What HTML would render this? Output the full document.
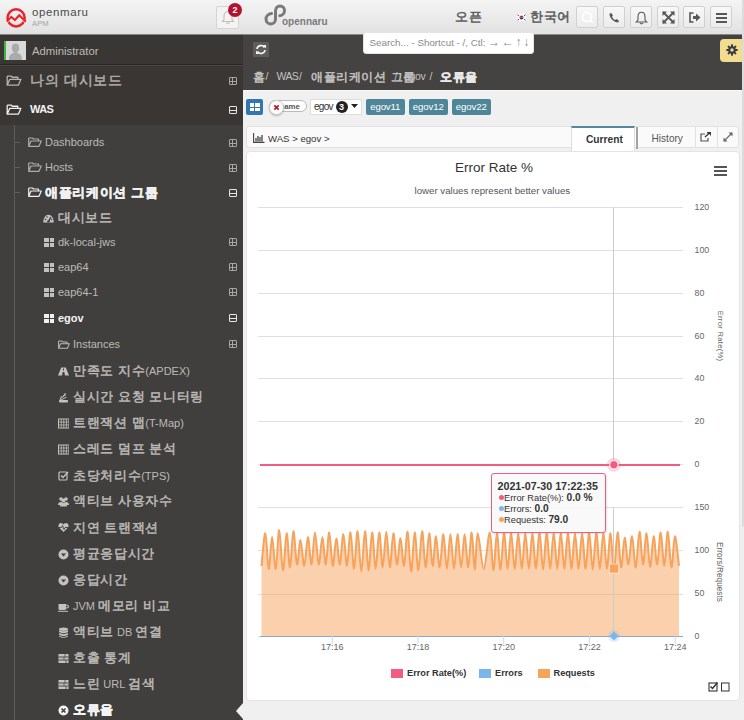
<!DOCTYPE html>
<html><head><meta charset="utf-8">
<style>
*{box-sizing:border-box;margin:0;padding:0}
html,body{width:744px;height:720px;overflow:hidden;font-family:"Liberation Sans",sans-serif;background:#f0f0f0}
.a{position:absolute}
.t{position:absolute;white-space:nowrap;line-height:1}
.k{letter-spacing:0.05em;font-size:1.15em;-webkit-text-stroke:0.5px currentColor}
#hdr{left:0;top:0;width:744px;height:34px;background:linear-gradient(#f4f4f4,#e2e2e2)}
#side{left:0;top:34px;width:243px;height:686px;background:#3f3c3a}
.btn{position:absolute;top:6px;width:22px;height:22px;border:1px solid #d0d0d0;border-radius:2px;background:linear-gradient(#f8f8f8,#ececec)}
.si{color:#bdbab7;font-size:11px}
.pm{position:absolute;left:228.5px;width:8px;height:8px;border:1px solid #a8a6a4;border-radius:1px;margin-top:1px}
.pm:before{content:"";position:absolute;left:0;top:2.5px;width:6px;height:1px;background:#a8a6a4}
.pm.p:after{content:"";position:absolute;left:2.5px;top:0;width:1px;height:6px;background:#a8a6a4}
.pm.w{border-color:#e6e6e6}.pm.w:before{background:#e6e6e6}
.ylab{font-size:9px;color:#666}
.grid{position:absolute;height:1px;background:#e6e6e6}
</style></head>
<body>
<div id="hdr" class="a">
 <svg class="a" style="left:5px;top:7px" width="24" height="22" viewBox="0 0 24 22">
  <circle cx="11.1" cy="10.9" r="8.6" fill="none" stroke="#e8232c" stroke-width="2.5"/>
  <path d="M2.2 15.6 L6.3 10.9 L9.9 14 L14.2 9.3 L20.5 15.8" fill="none" stroke="#f0f0f0" stroke-width="1.2"/>
  <path d="M1.9 14.6 L6.3 9.9 L9.9 13 L14.2 8.3 L20.8 14.8" fill="none" stroke="#e8232c" stroke-width="2"/>
 </svg>
 <div class="t" style="left:32px;top:6.5px;font-size:11.5px;color:#4a4a4a;letter-spacing:0.6px">openmaru</div>
 <div class="t" style="left:32px;top:19.5px;font-size:7.7px;color:#a5a5a5">APM</div>
 <div class="a" style="left:216px;top:6px;width:23px;height:22.5px;border:1px solid #d4d4d4;background:#f3f3f3;border-radius:2px">
  <svg class="a" style="left:4px;top:3px" width="14" height="15" viewBox="0 0 14 15"><path d="M7 1.5 C4 1.5 3 4 3 6.5 L3 9.5 L1.5 11.5 L12.5 11.5 L11 9.5 L11 6.5 C11 4 10 1.5 7 1.5 Z M5.5 12.5 Q7 14.5 8.5 12.5" fill="none" stroke="#c9bcb4" stroke-width="1.1"/></svg>
 </div>
 <div class="a" style="left:228px;top:3px;width:14px;height:14px;border-radius:7px;background:#b3122e"></div>
 <div class="t" style="left:228px;top:5.5px;width:14px;text-align:center;font-size:9px;font-weight:bold;color:#fff">2</div>
 <svg class="a" style="left:264px;top:4px" width="24" height="24" viewBox="0 0 24 24"><path d="M7.5 9.5 C4 10 2 12.5 2 15 C2 18 4.5 20 7 20 C10 20 11.5 17.5 11.5 15 L11.5 7 C11.5 4 13.5 2 16 2 C18.5 2 20.5 4 20.5 6.5 C20.5 9 18.5 11.5 15.7 11.7" fill="none" stroke="#7a7a7a" stroke-width="3" stroke-linecap="round"/></svg>
 <div class="t" style="left:282px;top:16.5px;font-size:10px;color:#7a7a7a;font-weight:bold">opennaru</div>
 <div class="t" style="left:455px;top:11px;font-size:11px;color:#585858"><span class="k">오픈</span></div>
 <svg class="a" style="left:517px;top:14px" width="9" height="7" viewBox="0 0 9 7"><rect width="9" height="7" fill="#fff"/><path d="M2.5 3.5 A2 2 0 0 1 6.5 3.5 Z" fill="#d22"/><path d="M2.5 3.5 A2 2 0 0 0 6.5 3.5 Z" fill="#1a3e9a"/><path d="M0.5 0.8 L2 2 M7 2 L8.5 0.8 M0.5 6.2 L2 5 M7 5 L8.5 6.2" stroke="#333" stroke-width="0.9"/></svg>
 <div class="t" style="left:530px;top:11px;font-size:11px;color:#585858"><span class="k">한국어</span></div>
 <svg class="a" style="left:562px;top:15px" width="6" height="5" viewBox="0 0 6 5"><path d="M0.5 1 L3 3.5 L5.5 1" fill="none" stroke="#555" stroke-width="1"/></svg>
 <div class="btn" style="left:576px"><svg class="a" style="left:4px;top:4px" width="13" height="13" viewBox="0 0 13 13"><circle cx="6" cy="6" r="4.6" fill="none" stroke="#fff" stroke-width="1.6"/><path d="M9.2 9.2 L12 12" stroke="#fff" stroke-width="1.6"/></svg></div>
 <div class="btn" style="left:603px"><svg class="a" style="left:5px;top:5px" width="11" height="11" viewBox="0 0 11 11"><path d="M2 0.8 L4 3.5 L3 4.8 C3.8 6.5 4.6 7.3 6.2 8 L7.5 7 L10.2 9 L9 10.5 C5 10.5 0.5 6 0.5 2 Z" fill="#585858"/></svg></div>
 <div class="btn" style="left:630px"><svg class="a" style="left:4px;top:4px" width="13" height="14" viewBox="0 0 13 14"><path d="M6.5 1.2 C3.8 1.2 3 3.5 3 6 L3 9 L1.2 11 L11.8 11 L10 9 L10 6 C10 3.5 9.2 1.2 6.5 1.2 Z M5 12 Q6.5 13.8 8 12" fill="none" stroke="#585858" stroke-width="1.1"/></svg></div>
 <div class="btn" style="left:657px"><svg class="a" style="left:4px;top:4px" width="13" height="13" viewBox="0 0 13 13"><path d="M1 1 L12 12 M12 1 L1 12" stroke="#585858" stroke-width="1.8"/><path d="M0.5 0.5 L5 0.5 L0.5 5 Z M12.5 0.5 L8 0.5 L12.5 5 Z M0.5 12.5 L5 12.5 L0.5 8 Z M12.5 12.5 L8 12.5 L12.5 8 Z" fill="#585858"/></svg></div>
 <div class="btn" style="left:683px"><svg class="a" style="left:5px;top:5px" width="12" height="11" viewBox="0 0 12 11"><path d="M4.5 1 L1 1 L1 10 L4.5 10" fill="none" stroke="#585858" stroke-width="1.6"/><path d="M4 4 L7 4 L7 1.5 L11.5 5.5 L7 9.5 L7 7 L4 7 Z" fill="#585858"/></svg></div>
 <div class="btn" style="left:710px"><div class="a" style="left:5px;top:6px;width:11px;height:2px;background:#585858;box-shadow:0 4px 0 #585858,0 8px 0 #585858"></div></div>
</div>
<div id="side" class="a">
 <div class="a" style="left:0;top:0;width:243px;height:91px;background:#3a3633"></div>
 <div class="a" style="left:0;top:30px;width:243px;height:1px;background:#2a2725"></div>
 <div class="a" style="left:0;top:31px;width:243px;height:1px;background:#4a4644"></div>
 <div class="a" style="left:4px;top:7px;width:22px;height:19px;background:#d9d9d9;border-left:2.5px solid #3fb63f">
  <svg class="a" style="left:0;top:0" width="19" height="19" viewBox="0 0 19 19"><path d="M9.5 2.5 C7 2.5 5.8 4.5 5.8 7 C5.8 9 6.8 10.5 7.8 11.2 L7.8 12 C4.5 12.8 3 14.5 3 19 L16 19 C16 14.5 14.5 12.8 11.2 12 L11.2 11.2 C12.2 10.5 13.2 9 13.2 7 C13.2 4.5 12 2.5 9.5 2.5 Z" fill="#ababab"/></svg>
 </div>
 <div class="t" style="left:32px;top:11.8px;font-size:11.3px;color:#bdbab7">Administrator</div>
</div>
<div class="a" style="left:0;top:125px;width:243px;height:595px;background:#403f3d"></div>
<!-- folder icons -->
<svg width="0" height="0" style="position:absolute"><defs>
 <g id="fold"><path d="M0.7 2 L0.7 10.3 L11 10.3 L13.3 5 L3 5 L0.7 10.3 M0.7 2 L4.5 2 L5.5 3 L10.5 3 L10.5 5" fill="none" stroke="currentColor" stroke-width="1.2" stroke-linejoin="round"/></g>
</defs></svg>
<svg class="a" style="left:6px;top:74px;color:#b6b3b0" width="16" height="13" viewBox="0 0 14 12"><use href="#fold"/></svg>
<div class="t si" style="left:30px;top:74px;font-size:12px;color:#aeaba8"><span class="k">나의 대시보드</span></div>
<div class="pm p" style="top:76px"></div>
<svg class="a" style="left:6px;top:103px;color:#f0f0f0" width="16" height="13" viewBox="0 0 14 12"><use href="#fold"/></svg>
<div class="t" style="left:30px;top:104px;font-size:11px;color:#f2f2f2;font-weight:bold;letter-spacing:-0.6px">WAS</div>
<div class="pm w" style="top:105px"></div>
<!-- tree line -->
<div class="a" style="left:14px;top:125px;width:1px;height:595px;background:#5e5b59"></div>
<div class="a" style="left:14px;top:142px;width:6px;height:1px;background:#5e5b59"></div>
<div class="a" style="left:14px;top:167px;width:6px;height:1px;background:#5e5b59"></div>
<div class="a" style="left:14px;top:192px;width:6px;height:1px;background:#5e5b59"></div>
<svg class="a" style="left:28px;top:136px;color:#aeaba8" width="14" height="12" viewBox="0 0 14 12"><use href="#fold"/></svg>
<div class="t si" style="left:45px;top:137px">Dashboards</div>
<div class="pm p" style="top:138px"></div>
<svg class="a" style="left:28px;top:161px;color:#aeaba8" width="14" height="12" viewBox="0 0 14 12"><use href="#fold"/></svg>
<div class="t si" style="left:45px;top:162px">Hosts</div>
<div class="pm p" style="top:163px"></div>
<svg class="a" style="left:28px;top:186px;color:#f0f0f0" width="14" height="12" viewBox="0 0 14 12"><use href="#fold"/></svg>
<div class="t si" style="left:45px;top:187px;color:#f0f0f0;font-weight:bold"><span class="k">애플리케이션 그룹</span></div>
<div class="pm w" style="top:188px"></div>
<!-- level 3 -->
<svg class="a" style="left:43px;top:213.5px" width="11" height="9" viewBox="0 0 11 9"><path d="M0.3 8.5 C0.3 4 2.6 0.8 5.5 0.8 C8.4 0.8 10.7 4 10.7 8.5 Z" fill="#c4c1be"/><path d="M5.5 7.5 L7.8 3" stroke="#403f3d" stroke-width="1.3"/><circle cx="2.5" cy="5.5" r="0.8" fill="#403f3d"/><circle cx="8.5" cy="5.5" r="0.8" fill="#403f3d"/><circle cx="4" cy="3" r="0.8" fill="#403f3d"/><circle cx="5.5" cy="7.3" r="1.2" fill="#403f3d"/></svg>
<div class="t si" style="left:58px;top:212px"><span class="k">대시보드</span></div>
<div class="a" style="left:43.5px;top:237.5px;width:10.5px;height:9px;background:#c4c1be"><div class="a" style="left:0;top:4px;width:10.5px;height:1px;background:#403f3d"></div><div class="a" style="left:5px;top:0;width:1px;height:9px;background:#403f3d"></div></div>
<div class="t si" style="left:58px;top:237px">dk-local-jws</div>
<div class="pm p" style="top:237px"></div>
<div class="a" style="left:43.5px;top:262.5px;width:10.5px;height:9px;background:#c4c1be"><div class="a" style="left:0;top:4px;width:10.5px;height:1px;background:#403f3d"></div><div class="a" style="left:5px;top:0;width:1px;height:9px;background:#403f3d"></div></div>
<div class="t si" style="left:58px;top:262px">eap64</div>
<div class="pm p" style="top:262px"></div>
<div class="a" style="left:43.5px;top:287.5px;width:10.5px;height:9px;background:#c4c1be"><div class="a" style="left:0;top:4px;width:10.5px;height:1px;background:#403f3d"></div><div class="a" style="left:5px;top:0;width:1px;height:9px;background:#403f3d"></div></div>
<div class="t si" style="left:58px;top:287px">eap64-1</div>
<div class="pm p" style="top:287px"></div>
<div class="a" style="left:43.5px;top:313.5px;width:10.5px;height:9px;background:#f0f0f0"><div class="a" style="left:0;top:4px;width:10.5px;height:1px;background:#403f3d"></div><div class="a" style="left:5px;top:0;width:1px;height:9px;background:#403f3d"></div></div>
<div class="t si" style="left:58px;top:313px;color:#f4f4f4;font-weight:bold">egov</div>
<div class="pm w" style="top:313px"></div>
<svg class="a" style="left:58px;top:339px;color:#bdbab7" width="12" height="11" viewBox="0 0 14 12"><use href="#fold"/></svg>
<div class="t si" style="left:73px;top:339px">Instances</div>
<div class="pm p" style="top:339px"></div>
<svg class="a" style="left:58px;top:365.5px" width="11" height="11" viewBox="0 0 11 11"><path d="M0 9.5 L3.2 1.5 L7.8 1.5 L11 9.5 L7 9.5 L6.3 6 L4.7 6 L4 9.5 Z" fill="#c4c1be"/><rect x="5" y="2.5" width="1" height="2" fill="#403f3d"/></svg>
<div class="t si" style="left:73px;top:365px"><span class="k">만족도 지수</span>(APDEX)</div>
<svg class="a" style="left:58px;top:391.5px" width="11" height="11" viewBox="0 0 11 11"><path d="M1.5 10 L9.5 10 L9.5 8.5 L1.5 8.5 Z M2 8 L3.5 4 M3 8 L8.5 5 M3.5 6 L8 2.5 M5 4.5 L7.5 1" fill="#c4c1be" stroke="#c4c1be" stroke-width="1"/></svg>
<div class="t si" style="left:73px;top:391px"><span class="k">실시간 요청 모니터링</span></div>
<svg class="a" style="left:58px;top:417.5px" width="11" height="11" viewBox="0 0 11 11"><rect x="0.5" y="1" width="10.5" height="9" fill="none" stroke="#c4c1be" stroke-width="1"/><path d="M0.5 4 H11 M0.5 7 H11 M3.2 1 V10 M5.8 1 V10 M8.4 1 V10" stroke="#c4c1be" stroke-width="0.8"/></svg>
<div class="t si" style="left:73px;top:417px"><span class="k">트랜잭션 맵</span>(T-Map)</div>
<svg class="a" style="left:58px;top:443.5px" width="11" height="11" viewBox="0 0 11 11"><rect x="0.5" y="1" width="10.5" height="9" fill="none" stroke="#c4c1be" stroke-width="1"/><path d="M0.5 4 H11 M0.5 7 H11 M3.2 1 V10 M5.8 1 V10 M8.4 1 V10" stroke="#c4c1be" stroke-width="0.8"/></svg>
<div class="t si" style="left:73px;top:443px"><span class="k">스레드 덤프 분석</span></div>
<svg class="a" style="left:58px;top:470.0px" width="11" height="11" viewBox="0 0 11 11"><rect x="1" y="2" width="8" height="8" rx="1" fill="none" stroke="#c4c1be" stroke-width="1.2"/><path d="M3 5.5 L5 7.5 L10 2" fill="none" stroke="#c4c1be" stroke-width="1.5"/></svg>
<div class="t si" style="left:73px;top:469.5px"><span class="k">초당처리수</span>(TPS)</div>
<svg class="a" style="left:58px;top:495.5px" width="11" height="11" viewBox="0 0 11 11"><circle cx="3" cy="3" r="1.8" fill="#c4c1be"/><circle cx="8" cy="3" r="1.8" fill="#c4c1be"/><circle cx="5.5" cy="4.5" r="2" fill="#c4c1be"/><path d="M0 9 Q0 6 3 6 Q5.5 6 5.5 9 Z M5.5 9 Q5.5 6 8 6 Q11 6 11 9 Z M2 10.5 Q2 7 5.5 7 Q9 7 9 10.5 Z" fill="#c4c1be"/></svg>
<div class="t si" style="left:73px;top:495px"><span class="k">액티브 사용자수</span></div>
<svg class="a" style="left:58px;top:522.0px" width="11" height="11" viewBox="0 0 11 11"><path d="M5.5 10 L1 5.5 C-0.5 3.5 1 1 3 1 C4.2 1 5 2 5.5 2.5 C6 2 6.8 1 8 1 C10 1 11.5 3.5 10 5.5 Z" fill="#c4c1be"/><path d="M1 5.5 L3.5 5.5 L4.5 3.5 L6 7.5 L7 5.5 L10 5.5" fill="none" stroke="#403f3d" stroke-width="0.9"/></svg>
<div class="t si" style="left:73px;top:521.5px"><span class="k">지연 트랜잭션</span></div>
<svg class="a" style="left:58px;top:548.5px" width="11" height="11" viewBox="0 0 11 11"><circle cx="5.5" cy="5.5" r="5" fill="#c4c1be"/><path d="M3 4.5 L8 4.5 L5.5 7.5 Z" fill="#403f3d"/></svg>
<div class="t si" style="left:73px;top:548px"><span class="k">평균응답시간</span></div>
<svg class="a" style="left:58px;top:574.5px" width="11" height="11" viewBox="0 0 11 11"><circle cx="5.5" cy="5.5" r="5" fill="#c4c1be"/><path d="M3 4.5 L8 4.5 L5.5 7.5 Z" fill="#403f3d"/></svg>
<div class="t si" style="left:73px;top:574px"><span class="k">응답시간</span></div>
<svg class="a" style="left:58px;top:600.5px" width="11" height="11" viewBox="0 0 11 11"><path d="M0.5 3 L8 3 L8 7.5 Q8 9 6.5 9 L2 9 Q0.5 9 0.5 7.5 Z" fill="#c4c1be"/><path d="M8 4 Q10.5 4 10.5 5.5 Q10.5 7 8 7" fill="none" stroke="#c4c1be" stroke-width="1.1"/><rect x="0" y="9.8" width="10" height="1" fill="#c4c1be"/></svg>
<div class="t si" style="left:73px;top:600px">JVM <span class="k">메모리 비교</span></div>
<svg class="a" style="left:58px;top:626.5px" width="11" height="11" viewBox="0 0 11 11"><ellipse cx="5.5" cy="2.2" rx="4.5" ry="1.7" fill="#c4c1be"/><path d="M1 3.2 V5 Q5.5 7.5 10 5 V3.2 Q5.5 5.5 1 3.2 Z M1 6 V7.8 Q5.5 10.3 10 7.8 V6 Q5.5 8.3 1 6 Z M1 8.8 V9.5 Q5.5 12 10 9.5 V8.8 Q5.5 11 1 8.8 Z" fill="#c4c1be"/></svg>
<div class="t si" style="left:73px;top:626px"><span class="k">액티브</span> DB <span class="k">연결</span></div>
<svg class="a" style="left:58px;top:652.5px" width="11" height="11" viewBox="0 0 11 11"><rect x="0.5" y="1" width="10" height="9" fill="#c4c1be"/><path d="M0.5 4 H10.5 M0.5 7 H10.5" stroke="#403f3d" stroke-width="0.9"/><path d="M7 1 V4 M6 4 V7 M8 7 V10" stroke="#403f3d" stroke-width="0.7"/></svg>
<div class="t si" style="left:73px;top:652px"><span class="k">호출 통계</span></div>
<svg class="a" style="left:58px;top:678.9px" width="11" height="11" viewBox="0 0 11 11"><rect x="0.5" y="1" width="10" height="9" fill="#c4c1be"/><path d="M0.5 4 H10.5 M0.5 7 H10.5" stroke="#403f3d" stroke-width="0.9"/><path d="M7 1 V4 M6 4 V7 M8 7 V10" stroke="#403f3d" stroke-width="0.7"/></svg>
<div class="t si" style="left:73px;top:678.4px"><span class="k">느린</span> URL <span class="k">검색</span></div>
<svg class="a" style="left:58px;top:704.5px" width="11" height="11" viewBox="0 0 11 11"><circle cx="5.5" cy="5.5" r="5" fill="#f4f4f4"/><path d="M3.5 3.5 L7.5 7.5 M7.5 3.5 L3.5 7.5" stroke="#403f3d" stroke-width="1.5"/></svg>
<div class="t si" style="left:73px;top:704px;color:#f4f4f4;font-weight:bold"><span class="k">오류율</span></div>
<div class="a" style="left:236px;top:703px;width:0;height:0;border-top:8px solid transparent;border-bottom:8px solid transparent;border-right:7px solid #f0f0f0"></div>
<div class="a" style="left:243px;top:34px;width:501px;height:56px;background:#454341"></div>
<div class="a" style="left:0;top:34px;width:744px;height:1px;background:#d0d0d0;opacity:.5"></div>
<div class="a" style="left:253px;top:42px;width:16px;height:15px;background:#5f5d5c;border-radius:1px">
 <svg class="a" style="left:2px;top:2px" width="12" height="11" viewBox="0 0 12 11"><path d="M2 5 A4 3.8 0 0 1 9.5 3.5 M10 6 A4 3.8 0 0 1 2.5 7.5" fill="none" stroke="#f4f4f4" stroke-width="1.6"/><path d="M8 1 L11 1 L11 4.5 Z M4 10 L1 10 L1 6.5 Z" fill="#f4f4f4"/></svg>
</div>
<div class="a" style="left:363px;top:31.5px;width:171px;height:22px;background:#fff;border-radius:3px;border:1px solid #e4e4e4"></div>
<div class="t" style="left:369.5px;top:37.5px;font-size:9.8px;color:#8a8a8a">Search... - Shortcut - /, Ctl:</div><div class="t" style="left:488px;top:36px;font-size:12px;color:#8a8a8a;letter-spacing:-0.8px">→ ← ↑ ↓</div>
<div class="a" style="left:720px;top:38.5px;width:22px;height:23px;background:#f2dc8e;border-radius:4px 0 0 4px"></div>
<svg class="a" style="left:725.5px;top:44px" width="12" height="12" viewBox="0 0 12 12"><g fill="#363b45"><circle cx="6" cy="6" r="3.8"/><rect x="5" y="0.3" width="2" height="11.4" rx="0.6"/><rect x="0.3" y="5" width="11.4" height="2" rx="0.6"/><rect x="5" y="0.3" width="2" height="11.4" rx="0.6" transform="rotate(45 6 6)"/><rect x="5" y="0.3" width="2" height="11.4" rx="0.6" transform="rotate(-45 6 6)"/></g><circle cx="6" cy="6" r="1.7" fill="#f2dc8e"/></svg>
<div class="t" style="left:253px;top:70.5px;font-size:10.5px;color:#c4c2c0"><span class="k">홈</span></div>
<div class="t" style="left:265.5px;top:71px;font-size:10.5px;color:#c4c2c0">/</div>
<div class="t" style="left:276.5px;top:71px;font-size:10.5px;color:#c4c2c0;letter-spacing:-0.6px">WAS</div>
<div class="t" style="left:299px;top:71px;font-size:10.5px;color:#c4c2c0">/</div>
<div class="t" style="left:311px;top:70.5px;font-size:10.5px;color:#c4c2c0"><span class="k">애플리케이션 그룹</span></div>
<div class="t" style="left:394.5px;top:71px;font-size:10.5px;color:#c4c2c0">/</div>
<div class="t" style="left:404px;top:71px;font-size:10.5px;color:#c4c2c0;letter-spacing:-0.3px">egov</div>
<div class="t" style="left:429.5px;top:71px;font-size:10.5px;color:#c4c2c0">/</div>
<div class="t" style="left:440px;top:70.5px;font-size:10.5px;color:#e8e8e8;font-weight:bold"><span class="k">오류율</span></div>
<!-- content bg -->
<div class="a" style="left:243px;top:90px;width:501px;height:630px;background:#f0f0f0;border-top:1px solid #f9f9f9"></div>

<!-- filter row -->
<div class="a" style="left:246px;top:99px;width:17px;height:16px;background:#3276b1;border-radius:2px"><div class="a" style="left:3.5px;top:4px;width:10px;height:8px;background:#fff"><div class="a" style="left:0;top:3.5px;width:10px;height:1px;background:#3276b1"></div><div class="a" style="left:4.5px;top:0;width:1px;height:8px;background:#3276b1"></div></div></div>
<div class="a" style="left:269px;top:100px;width:38px;height:12px;background:#fff;border:1px solid #bbb;border-radius:6px"></div>
<div class="t" style="left:279.5px;top:103px;font-size:7.8px;color:#555;font-weight:bold">name</div>
<div class="a" style="left:268.5px;top:99.5px;width:15px;height:15px;background:#fff;border:1px solid #ccc;border-radius:8px;box-shadow:0 1px 2px rgba(0,0,0,.25)"></div>
<svg class="a" style="left:273px;top:104px" width="7" height="7" viewBox="0 0 7 7"><path d="M1.3 1.3 L5.7 5.7 M5.7 1.3 L1.3 5.7" stroke="#c0142a" stroke-width="1.7"/></svg>
<div class="a" style="left:310px;top:99px;width:52px;height:16px;background:#fff;border:1px solid #ddd"></div>
<div class="t" style="left:314px;top:102px;font-size:10px;color:#333;letter-spacing:-0.7px">egov</div>
<div class="a" style="left:335.5px;top:101px;width:12px;height:12px;border-radius:6px;background:#222"></div>
<div class="t" style="left:335.5px;top:102.5px;width:12px;text-align:center;font-size:9px;color:#fff;font-weight:bold">3</div>
<svg class="a" style="left:351px;top:104px" width="7" height="5" viewBox="0 0 7 5"><path d="M0 0 L7 0 L3.5 4 Z" fill="#222"/></svg>
<div class="a" style="left:366px;top:98.5px;width:38.5px;height:16px;background:#4f8599;border-radius:2px"></div>
<div class="t" style="left:366px;top:101.5px;width:38.5px;text-align:center;font-size:9.6px;color:#fff;letter-spacing:-0.1px">egov11</div>
<div class="a" style="left:409px;top:98.5px;width:38.5px;height:16px;background:#4f8599;border-radius:2px"></div>
<div class="t" style="left:409px;top:101.5px;width:38.5px;text-align:center;font-size:9.6px;color:#fff;letter-spacing:-0.1px">egov12</div>
<div class="a" style="left:451.5px;top:98.5px;width:39.5px;height:16px;background:#4f8599;border-radius:2px"></div>
<div class="t" style="left:451.5px;top:101.5px;width:39.5px;text-align:center;font-size:9.6px;color:#fff;letter-spacing:-0.1px">egov22</div>
<!-- panel header -->
<div class="a" style="left:246px;top:126px;width:493px;height:22px;background:#fafafa;border:1px solid #e2e2e2;border-radius:3px"></div>
<svg class="a" style="left:252.5px;top:133px" width="12" height="10" viewBox="0 0 12 10"><path d="M0.6 0 V9.4 H11.5" fill="none" stroke="#444" stroke-width="1.1"/><path d="M3 5 V8.5 M5 3 V8.5 M7 4 V8.5 M9 2 V8.5" stroke="#444" stroke-width="1.3"/></svg>
<div class="t" style="left:268px;top:134px;font-size:9.6px;color:#333">WAS &gt; egov &gt;</div>
<div class="a" style="left:571px;top:125.5px;width:64px;height:25px;background:#fff;border-top:2px solid #57889c;border-left:1px solid #ddd;border-right:1px solid #ddd"></div>
<div class="a" style="left:635.5px;top:127px;width:2px;height:22px;background:#a4a4a4"></div>
<div class="t" style="left:586px;top:134.5px;font-size:10.2px;color:#333;font-weight:bold">Current</div>
<div class="t" style="left:651.5px;top:134px;font-size:10.1px;color:#555">History</div>
<div class="a" style="left:694.5px;top:127px;width:1px;height:20px;background:#e2e2e2"></div>
<div class="a" style="left:717px;top:127px;width:1px;height:21px;background:#e2e2e2"></div>
<svg class="a" style="left:700px;top:132px" width="11" height="10" viewBox="0 0 11 10"><path d="M5 2 H1 V9 H8 V6" fill="none" stroke="#555" stroke-width="1.2"/><path d="M5 5 L10 0.5 M7 0.5 H10.5 V3.5" fill="none" stroke="#333" stroke-width="1.3"/></svg>
<svg class="a" style="left:723px;top:132px" width="10" height="10" viewBox="0 0 10 10"><path d="M1 9 L9 1" stroke="#666" stroke-width="1.1"/><path d="M0.5 5.5 V9.5 H4.5 Z M9.5 4.5 V0.5 H5.5 Z" fill="#666"/></svg>
<div class="a" style="left:246px;top:151px;width:493.5px;height:549.5px;background:#fff;border:1px solid #e4e4e4;border-radius:4px"></div>
<div class="t" style="left:455px;top:161px;font-size:13.5px;color:#333">Error Rate %</div>
<div class="t" style="left:414.5px;top:185.5px;font-size:9.7px;color:#555">lower values represent better values</div>
<div class="a" style="left:713.5px;top:166px;width:13px;height:2px;background:#555;box-shadow:0 4px 0 #555,0 8px 0 #555"></div>
<svg class="a" style="left:0;top:0" width="744" height="720" viewBox="0 0 744 720">
<rect x="258" y="207" width="425" height="1" fill="#e0e0e0"/>
<rect x="258" y="250" width="425" height="1" fill="#e0e0e0"/>
<rect x="258" y="293" width="425" height="1" fill="#e0e0e0"/>
<rect x="258" y="336" width="425" height="1" fill="#e0e0e0"/>
<rect x="258" y="378" width="425" height="1" fill="#e0e0e0"/>
<rect x="258" y="421" width="425" height="1" fill="#e0e0e0"/>
<rect x="258" y="464" width="425" height="1" fill="#e0e0e0"/>
<rect x="258" y="507" width="425" height="1" fill="#e0e0e0"/>
<rect x="258" y="550" width="425" height="1" fill="#e0e0e0"/>
<rect x="258" y="594" width="425" height="1" fill="#e0e0e0"/>
<rect x="258" y="636" width="425" height="1" fill="#e0e0e0"/>
<path d="M261.5 566.0 C262.1 560.6 264.1 532.8 265.3 533.3 C266.6 533.8 267.6 568.1 268.7 568.8 C269.9 569.4 271.0 537.1 272.1 537.1 C273.3 537.1 274.5 569.9 275.7 568.8 C276.9 567.7 278.0 530.1 279.2 530.3 C280.5 530.6 281.7 569.8 282.9 570.3 C284.2 570.8 285.5 533.8 286.6 533.3 C287.8 532.8 288.9 567.7 290.0 567.3 C291.2 567.0 292.3 531.7 293.4 531.2 C294.6 530.7 295.8 562.9 297.0 564.4 C298.2 565.8 299.3 539.9 300.5 540.1 C301.7 540.4 303.0 566.3 304.2 565.8 C305.5 565.3 306.7 537.4 307.9 537.1 C309.1 536.9 310.3 565.1 311.5 564.4 C312.7 563.6 313.8 532.4 315.0 532.4 C316.2 532.4 317.5 563.6 318.7 564.4 C320.0 565.1 321.2 537.1 322.4 537.1 C323.6 537.1 324.7 565.1 325.8 564.4 C326.9 563.6 328.1 532.2 329.2 532.4 C330.4 532.7 331.6 564.8 332.8 565.8 C333.9 566.9 335.1 538.9 336.3 538.6 C337.5 538.4 338.7 565.1 339.9 564.4 C341.0 563.6 342.2 533.9 343.4 534.2 C344.6 534.4 345.8 566.1 347.0 565.8 C348.1 565.5 349.3 531.9 350.5 532.4 C351.7 532.9 352.9 569.0 354.1 568.8 C355.2 568.6 356.4 530.7 357.6 531.2 C358.8 531.7 360.1 571.7 361.3 571.7 C362.5 571.7 363.8 531.5 365.0 531.2 C366.2 531.0 367.4 570.1 368.5 570.3 C369.7 570.5 370.9 532.7 372.1 532.4 C373.3 532.2 374.5 568.8 375.6 568.8 C376.8 568.8 378.0 532.7 379.2 532.4 C380.4 532.2 381.6 567.4 382.7 567.3 C383.9 567.2 385.1 531.8 386.3 531.8 C387.5 531.8 388.6 567.1 389.8 567.3 C391.0 567.6 392.2 533.8 393.4 533.3 C394.6 532.8 395.7 563.5 396.9 564.4 C398.1 565.2 399.3 538.1 400.5 538.3 C401.7 538.6 402.8 566.9 404.0 565.8 C405.2 564.7 406.4 530.8 407.6 531.8 C408.8 532.8 409.9 571.6 411.1 571.7 C412.3 571.8 413.5 532.7 414.7 532.4 C415.9 532.2 417.1 570.5 418.4 570.3 C419.6 570.1 420.9 531.7 422.1 531.2 C423.3 530.7 424.4 567.0 425.6 567.3 C426.8 567.7 428.0 533.6 429.2 533.3 C430.3 533.1 431.4 565.3 432.6 565.8 C433.7 566.3 434.8 536.0 436.0 536.3 C437.1 536.5 438.4 567.7 439.7 567.3 C440.9 567.0 442.1 533.9 443.4 534.2 C444.6 534.4 445.7 568.8 446.9 568.8 C448.1 568.8 449.3 534.2 450.4 534.2 C451.6 534.2 452.8 568.8 454.0 568.8 C455.2 568.8 456.4 534.4 457.5 534.2 C458.7 533.9 459.9 567.3 461.1 567.3 C462.3 567.3 463.5 534.2 464.6 534.2 C465.8 534.2 467.0 567.6 468.2 567.3 C469.4 567.0 470.6 532.0 471.7 532.4 C472.8 532.8 473.7 569.5 474.7 569.7 C475.7 569.8 476.2 533.5 477.7 533.3 C479.2 533.2 481.8 568.9 483.8 568.8 C485.8 568.6 488.2 532.2 489.8 532.4 C491.4 532.7 492.2 570.1 493.4 570.3 C494.6 570.4 495.8 533.4 496.9 533.3 C498.1 533.2 499.3 569.8 500.5 569.7 C501.7 569.5 502.8 532.6 504.0 532.4 C505.2 532.3 506.4 568.8 507.6 568.8 C508.8 568.8 509.9 532.4 511.1 532.4 C512.3 532.4 513.5 568.6 514.7 568.8 C515.9 568.9 517.0 533.3 518.2 533.3 C519.4 533.3 520.6 568.8 521.8 568.8 C523.0 568.8 524.1 533.3 525.3 533.3 C526.5 533.3 527.7 568.8 528.9 568.8 C530.1 568.8 531.2 533.3 532.4 533.3 C533.6 533.3 534.8 568.9 536.0 568.8 C537.1 568.6 538.3 532.3 539.5 532.4 C540.7 532.6 541.9 569.7 543.1 569.7 C544.2 569.7 545.4 532.6 546.6 532.4 C547.8 532.3 549.0 568.8 550.2 568.8 C551.3 568.8 552.5 532.4 553.7 532.4 C554.9 532.4 556.1 568.8 557.3 568.8 C558.4 568.8 559.6 532.4 560.8 532.4 C562.0 532.4 563.2 568.8 564.3 568.8 C565.5 568.8 566.7 532.4 567.9 532.4 C569.1 532.4 570.3 568.6 571.4 568.8 C572.6 568.9 573.8 533.3 575.0 533.3 C576.2 533.3 577.4 568.8 578.5 568.8 C579.7 568.8 580.9 533.3 582.1 533.3 C583.3 533.3 584.5 568.9 585.6 568.8 C586.8 568.6 588.0 532.3 589.2 532.4 C590.4 532.6 591.6 569.7 592.7 569.7 C593.9 569.7 595.1 532.6 596.3 532.4 C597.5 532.3 598.6 568.8 599.8 568.8 C601.0 568.8 602.2 532.4 603.4 532.4 C604.6 532.4 605.7 568.6 606.9 568.8 C608.1 568.9 609.3 533.1 610.5 533.3 C611.7 533.6 612.8 570.4 614.0 570.3 C615.2 570.1 616.4 532.9 617.6 532.4 C618.8 531.9 619.9 566.4 621.1 567.3 C622.3 568.2 623.5 538.2 624.7 537.7 C625.9 537.2 627.1 564.6 628.4 564.4 C629.6 564.1 630.8 535.8 632.1 536.3 C633.3 536.8 634.5 568.0 635.8 567.3 C637.0 566.6 638.2 532.3 639.5 531.8 C640.7 531.3 641.8 564.1 643.0 564.4 C644.2 564.6 645.4 532.9 646.5 533.3 C647.7 533.7 648.9 566.2 650.1 566.7 C651.3 567.2 652.5 536.7 653.6 536.3 C654.8 535.9 656.0 565.0 657.2 564.4 C658.4 563.7 659.6 532.2 660.7 532.4 C661.9 532.7 663.1 565.9 664.3 565.8 C665.5 565.7 666.7 531.6 667.8 531.8 C669.0 532.1 670.2 566.6 671.4 567.3 C672.6 568.0 673.7 536.5 674.9 536.3 C676.2 536.0 678.3 560.9 679.0 565.8 L679 636 L261.5 636 Z" fill="#f7a35c" fill-opacity="0.5"/>
<path d="M261.5 566.0 C262.1 560.6 264.1 532.8 265.3 533.3 C266.6 533.8 267.6 568.1 268.7 568.8 C269.9 569.4 271.0 537.1 272.1 537.1 C273.3 537.1 274.5 569.9 275.7 568.8 C276.9 567.7 278.0 530.1 279.2 530.3 C280.5 530.6 281.7 569.8 282.9 570.3 C284.2 570.8 285.5 533.8 286.6 533.3 C287.8 532.8 288.9 567.7 290.0 567.3 C291.2 567.0 292.3 531.7 293.4 531.2 C294.6 530.7 295.8 562.9 297.0 564.4 C298.2 565.8 299.3 539.9 300.5 540.1 C301.7 540.4 303.0 566.3 304.2 565.8 C305.5 565.3 306.7 537.4 307.9 537.1 C309.1 536.9 310.3 565.1 311.5 564.4 C312.7 563.6 313.8 532.4 315.0 532.4 C316.2 532.4 317.5 563.6 318.7 564.4 C320.0 565.1 321.2 537.1 322.4 537.1 C323.6 537.1 324.7 565.1 325.8 564.4 C326.9 563.6 328.1 532.2 329.2 532.4 C330.4 532.7 331.6 564.8 332.8 565.8 C333.9 566.9 335.1 538.9 336.3 538.6 C337.5 538.4 338.7 565.1 339.9 564.4 C341.0 563.6 342.2 533.9 343.4 534.2 C344.6 534.4 345.8 566.1 347.0 565.8 C348.1 565.5 349.3 531.9 350.5 532.4 C351.7 532.9 352.9 569.0 354.1 568.8 C355.2 568.6 356.4 530.7 357.6 531.2 C358.8 531.7 360.1 571.7 361.3 571.7 C362.5 571.7 363.8 531.5 365.0 531.2 C366.2 531.0 367.4 570.1 368.5 570.3 C369.7 570.5 370.9 532.7 372.1 532.4 C373.3 532.2 374.5 568.8 375.6 568.8 C376.8 568.8 378.0 532.7 379.2 532.4 C380.4 532.2 381.6 567.4 382.7 567.3 C383.9 567.2 385.1 531.8 386.3 531.8 C387.5 531.8 388.6 567.1 389.8 567.3 C391.0 567.6 392.2 533.8 393.4 533.3 C394.6 532.8 395.7 563.5 396.9 564.4 C398.1 565.2 399.3 538.1 400.5 538.3 C401.7 538.6 402.8 566.9 404.0 565.8 C405.2 564.7 406.4 530.8 407.6 531.8 C408.8 532.8 409.9 571.6 411.1 571.7 C412.3 571.8 413.5 532.7 414.7 532.4 C415.9 532.2 417.1 570.5 418.4 570.3 C419.6 570.1 420.9 531.7 422.1 531.2 C423.3 530.7 424.4 567.0 425.6 567.3 C426.8 567.7 428.0 533.6 429.2 533.3 C430.3 533.1 431.4 565.3 432.6 565.8 C433.7 566.3 434.8 536.0 436.0 536.3 C437.1 536.5 438.4 567.7 439.7 567.3 C440.9 567.0 442.1 533.9 443.4 534.2 C444.6 534.4 445.7 568.8 446.9 568.8 C448.1 568.8 449.3 534.2 450.4 534.2 C451.6 534.2 452.8 568.8 454.0 568.8 C455.2 568.8 456.4 534.4 457.5 534.2 C458.7 533.9 459.9 567.3 461.1 567.3 C462.3 567.3 463.5 534.2 464.6 534.2 C465.8 534.2 467.0 567.6 468.2 567.3 C469.4 567.0 470.6 532.0 471.7 532.4 C472.8 532.8 473.7 569.5 474.7 569.7 C475.7 569.8 476.2 533.5 477.7 533.3 C479.2 533.2 481.8 568.9 483.8 568.8 C485.8 568.6 488.2 532.2 489.8 532.4 C491.4 532.7 492.2 570.1 493.4 570.3 C494.6 570.4 495.8 533.4 496.9 533.3 C498.1 533.2 499.3 569.8 500.5 569.7 C501.7 569.5 502.8 532.6 504.0 532.4 C505.2 532.3 506.4 568.8 507.6 568.8 C508.8 568.8 509.9 532.4 511.1 532.4 C512.3 532.4 513.5 568.6 514.7 568.8 C515.9 568.9 517.0 533.3 518.2 533.3 C519.4 533.3 520.6 568.8 521.8 568.8 C523.0 568.8 524.1 533.3 525.3 533.3 C526.5 533.3 527.7 568.8 528.9 568.8 C530.1 568.8 531.2 533.3 532.4 533.3 C533.6 533.3 534.8 568.9 536.0 568.8 C537.1 568.6 538.3 532.3 539.5 532.4 C540.7 532.6 541.9 569.7 543.1 569.7 C544.2 569.7 545.4 532.6 546.6 532.4 C547.8 532.3 549.0 568.8 550.2 568.8 C551.3 568.8 552.5 532.4 553.7 532.4 C554.9 532.4 556.1 568.8 557.3 568.8 C558.4 568.8 559.6 532.4 560.8 532.4 C562.0 532.4 563.2 568.8 564.3 568.8 C565.5 568.8 566.7 532.4 567.9 532.4 C569.1 532.4 570.3 568.6 571.4 568.8 C572.6 568.9 573.8 533.3 575.0 533.3 C576.2 533.3 577.4 568.8 578.5 568.8 C579.7 568.8 580.9 533.3 582.1 533.3 C583.3 533.3 584.5 568.9 585.6 568.8 C586.8 568.6 588.0 532.3 589.2 532.4 C590.4 532.6 591.6 569.7 592.7 569.7 C593.9 569.7 595.1 532.6 596.3 532.4 C597.5 532.3 598.6 568.8 599.8 568.8 C601.0 568.8 602.2 532.4 603.4 532.4 C604.6 532.4 605.7 568.6 606.9 568.8 C608.1 568.9 609.3 533.1 610.5 533.3 C611.7 533.6 612.8 570.4 614.0 570.3 C615.2 570.1 616.4 532.9 617.6 532.4 C618.8 531.9 619.9 566.4 621.1 567.3 C622.3 568.2 623.5 538.2 624.7 537.7 C625.9 537.2 627.1 564.6 628.4 564.4 C629.6 564.1 630.8 535.8 632.1 536.3 C633.3 536.8 634.5 568.0 635.8 567.3 C637.0 566.6 638.2 532.3 639.5 531.8 C640.7 531.3 641.8 564.1 643.0 564.4 C644.2 564.6 645.4 532.9 646.5 533.3 C647.7 533.7 648.9 566.2 650.1 566.7 C651.3 567.2 652.5 536.7 653.6 536.3 C654.8 535.9 656.0 565.0 657.2 564.4 C658.4 563.7 659.6 532.2 660.7 532.4 C661.9 532.7 663.1 565.9 664.3 565.8 C665.5 565.7 666.7 531.6 667.8 531.8 C669.0 532.1 670.2 566.6 671.4 567.3 C672.6 568.0 673.7 536.5 674.9 536.3 C676.2 536.0 678.3 560.9 679.0 565.8" fill="none" stroke="#f7a35c" stroke-width="2"/>
<rect x="613" y="207" width="1" height="257" fill="#cccccc"/><rect x="613" y="507" width="1" height="129" fill="#cccccc"/>
<rect x="260" y="636" width="423" height="1" fill="#8ca8cc"/>
<rect x="331.7" y="636" width="1" height="8" fill="#ccd6eb"/>
<rect x="417.45" y="636" width="1" height="8" fill="#ccd6eb"/>
<rect x="503.2" y="636" width="1" height="8" fill="#ccd6eb"/>
<rect x="588.95" y="636" width="1" height="8" fill="#ccd6eb"/>
<rect x="674.7" y="636" width="1" height="8" fill="#ccd6eb"/>
<rect x="260" y="464" width="420" height="2" fill="#f15c80"/>
<circle cx="613.9" cy="464.8" r="7" fill="#f15c80" fill-opacity="0.25"/><circle cx="613.9" cy="464.8" r="4.2" fill="#f15c80" stroke="#fff" stroke-width="1"/>
<rect x="609.5" y="564" width="9" height="9" fill="#f7a35c" stroke="#fff" stroke-width="0.5"/>
<circle cx="614" cy="636" r="6" fill="#7cb5ec" fill-opacity="0.25"/><path d="M614 631.5 L618.4 636 L614 640.5 L609.6 636 Z" fill="#7cb5ec"/>
</svg>
<div class="t ylab" style="left:694.5px;top:203px;font-size:8.8px">120</div>
<div class="t ylab" style="left:694.5px;top:245.8px;font-size:8.8px">100</div>
<div class="t ylab" style="left:694.5px;top:288.7px;font-size:8.8px">80</div>
<div class="t ylab" style="left:694.5px;top:331.5px;font-size:8.8px">60</div>
<div class="t ylab" style="left:694.5px;top:374.3px;font-size:8.8px">40</div>
<div class="t ylab" style="left:694.5px;top:417.2px;font-size:8.8px">20</div>
<div class="t ylab" style="left:694.5px;top:460px;font-size:8.8px">0</div>
<div class="t ylab" style="left:694.5px;top:503px;font-size:8.8px">150</div>
<div class="t ylab" style="left:694.5px;top:546px;font-size:8.8px">100</div>
<div class="t ylab" style="left:694.5px;top:589px;font-size:8.8px">50</div>
<div class="t ylab" style="left:694.5px;top:632px;font-size:8.8px">0</div>
<div class="t ylab" style="left:302.2px;width:60px;text-align:center;top:642.5px">17:16</div>
<div class="t ylab" style="left:387.95px;width:60px;text-align:center;top:642.5px">17:18</div>
<div class="t ylab" style="left:473.7px;width:60px;text-align:center;top:642.5px">17:20</div>
<div class="t ylab" style="left:559.45px;width:60px;text-align:center;top:642.5px">17:22</div>
<div class="t ylab" style="left:645.2px;width:60px;text-align:center;top:642.5px">17:24</div>
<div class="t" style="left:719.8px;top:336px;font-size:7.6px;letter-spacing:0.3px;color:#666;transform:translate(-50%,-50%) rotate(90deg)">Error Rate(%)</div>
<div class="t" style="left:719.5px;top:572px;font-size:8.3px;color:#666;transform:translate(-50%,-50%) rotate(90deg)">Errors/Requests</div>
<div class="a" style="left:491px;top:473px;width:115px;height:60px;background:rgba(249,249,249,.92);border:1px solid #f15c80;border-radius:3px;box-shadow:1px 1px 2px rgba(0,0,0,.12)"></div>
<div class="t" style="left:497.5px;top:480.5px;font-size:10.7px;color:#333;font-weight:bold">2021-07-30 17:22:35</div>
<div class="a" style="left:498.5px;top:494.5px;width:5px;height:5px;border-radius:3px;background:#f15c80"></div>
<div class="t" style="left:504px;top:492.5px;font-size:9.3px;color:#333">Error Rate(%): <b style="font-size:10.2px">0.0 %</b></div>
<div class="a" style="left:498.5px;top:505.5px;width:5px;height:5px;border-radius:3px;background:#7cb5ec"></div>
<div class="t" style="left:504px;top:503.5px;font-size:9.3px;color:#333">Errors: <b style="font-size:10.2px">0.0</b></div>
<div class="a" style="left:498.5px;top:516.5px;width:5px;height:5px;border-radius:3px;background:#f7a35c"></div>
<div class="t" style="left:504px;top:514.5px;font-size:9.3px;color:#333">Requests: <b style="font-size:10.2px">79.0</b></div>
<div class="a" style="left:391px;top:669px;width:12px;height:9px;background:#f15c80"></div>
<div class="t" style="left:407px;top:669px;font-size:9.2px;color:#333;font-weight:bold">Error Rate(%)</div>
<div class="a" style="left:479px;top:669px;width:12px;height:9px;background:#7cb5ec"></div>
<div class="t" style="left:495px;top:669px;font-size:9.2px;color:#333;font-weight:bold">Errors</div>
<div class="a" style="left:537.5px;top:669px;width:12px;height:9px;background:#f7a35c"></div>
<div class="t" style="left:553.5px;top:669px;font-size:9.2px;color:#333;font-weight:bold">Requests</div>
<svg class="a" style="left:708px;top:681px" width="22" height="11" viewBox="0 0 22 11"><rect x="1" y="2" width="8" height="8" fill="none" stroke="#333" stroke-width="1.1"/><path d="M2.5 5.5 L4.5 7.5 L9.5 1.5" fill="none" stroke="#333" stroke-width="1.5"/><rect x="13.5" y="2" width="7.5" height="8" fill="none" stroke="#333" stroke-width="1"/></svg>
<div class="a" style="left:742px;top:0;width:2px;height:527px;background:#dcdcdc;border-radius:0 0 1px 1px"></div>
</body></html>
